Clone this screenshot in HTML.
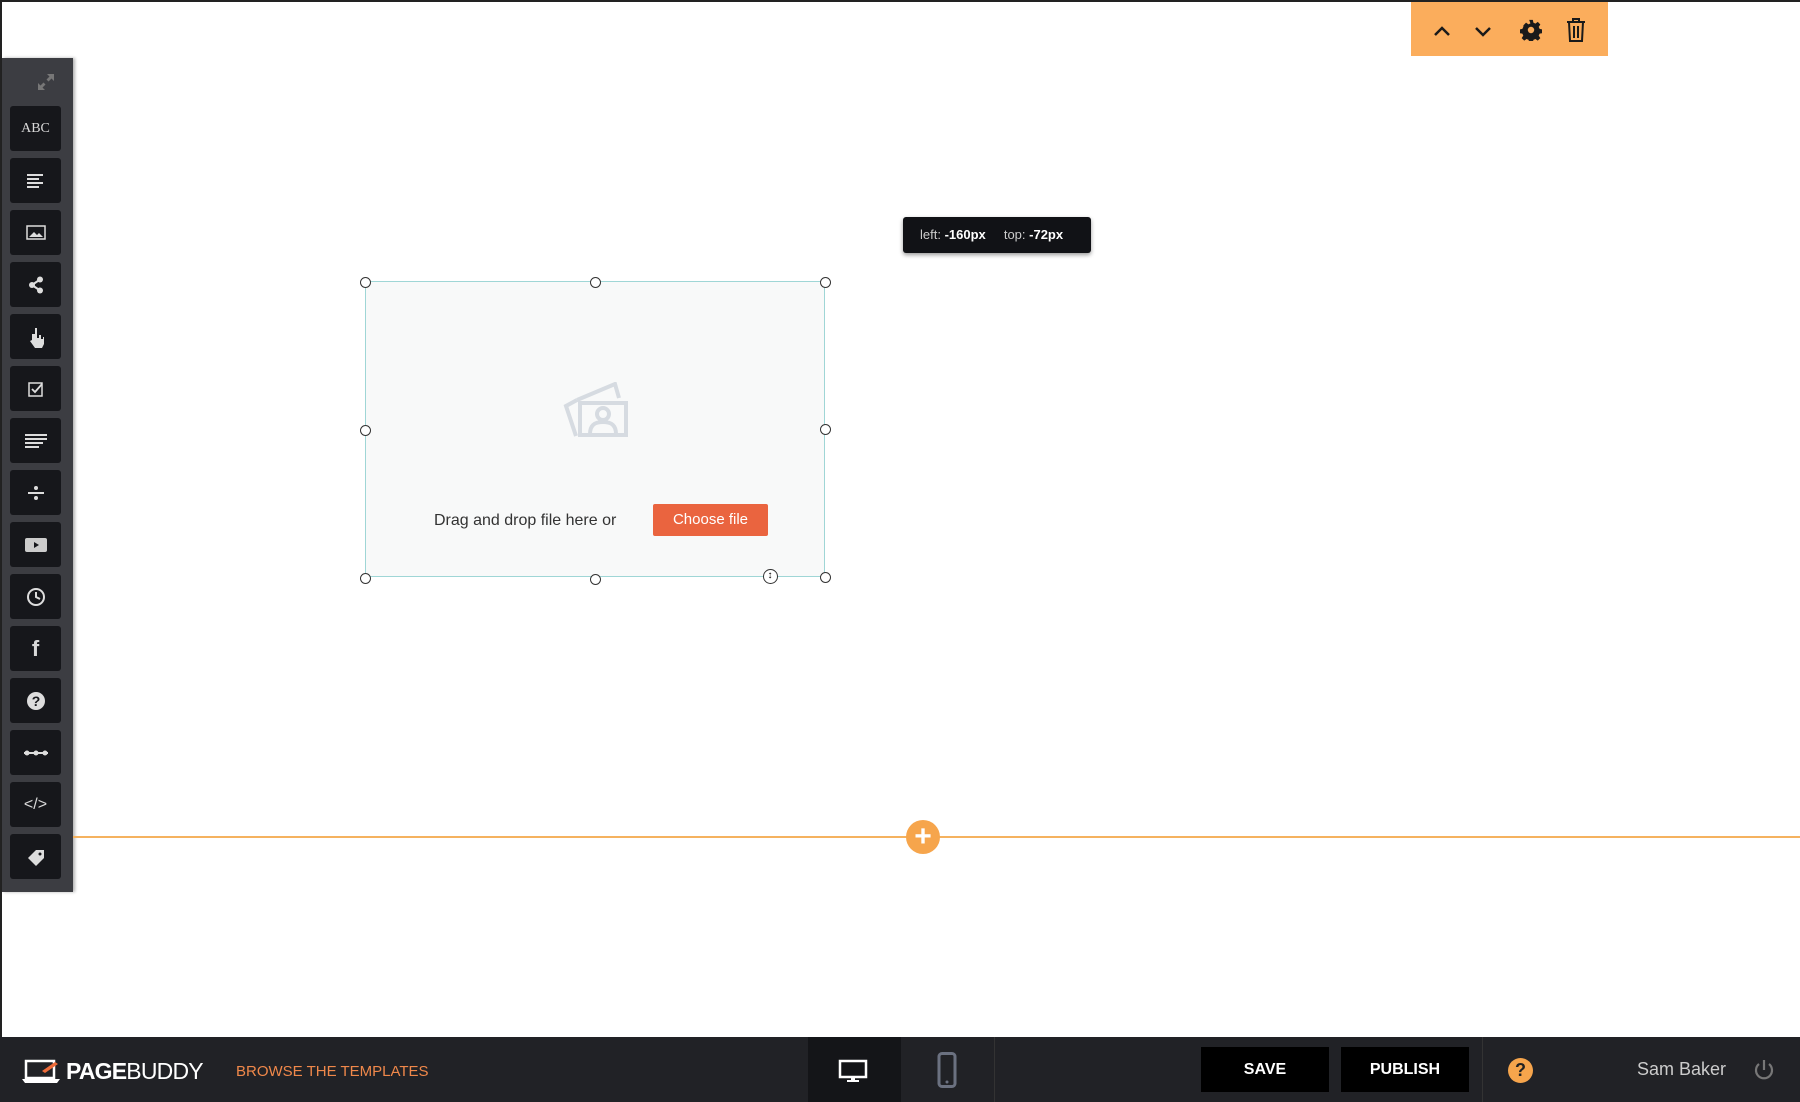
<!DOCTYPE html>
<html><head><meta charset="utf-8"><style>
*{margin:0;padding:0;box-sizing:border-box}
body{width:1800px;height:1102px;position:relative;overflow:hidden;background:#fff;font-family:"Liberation Sans",Arial,sans-serif}
.a{position:absolute}
.btn{position:absolute;left:10px;width:51px;height:45px;background:#16171b;border-radius:3px;display:flex;align-items:center;justify-content:center;color:#d8d8d8}
.h{position:absolute;width:11px;height:11px;border:1.5px solid #333;border-radius:50%;background:#fff;margin:-5.5px 0 0 -5.5px}
</style></head><body>
<div class="a" style="left:0;top:0;width:1800px;height:2px;background:#222"></div>
<div class="a" style="left:0;top:0;width:2px;height:1040px;background:#222"></div>
<!-- sidebar -->
<div class="a" style="left:2px;top:58px;width:71px;height:834px;background:#3c3d42;box-shadow:2px 0 3px rgba(0,0,0,.3)"></div>
<svg class="a" style="left:36px;top:72px" width="20" height="20" viewBox="0 0 20 20" fill="#777"><path d="M11 2h7v7l-2.5-2.5-3 3-2-2 3-3zM9 18H2v-7l2.5 2.5 3-3 2 2-3 3z"/></svg>
<div class="btn" style="top:106px;font-family:'Liberation Serif',serif;font-size:14px">ABC</div>
<div class="btn" style="top:158px"><svg width="18" height="14" fill="#ddd"><rect y="0" width="16" height="2"/><rect y="4" width="12" height="2"/><rect y="8" width="16" height="2"/><rect y="12" width="12" height="2"/></svg></div>
<div class="btn" style="top:210px"><svg width="20" height="15"><rect x="1" y="1" width="18" height="13" fill="none" stroke="#ddd" stroke-width="1.5"/><path d="M3 12l5-5 3 3 2-2 4 4z" fill="#ddd"/></svg></div>
<div class="btn" style="top:262px"><svg width="16" height="18" fill="#ddd"><circle cx="4" cy="9" r="3"/><circle cx="12" cy="3.5" r="3"/><circle cx="12" cy="14.5" r="3"/><path d="M4 9L12 3.5M4 9l8 5.5" stroke="#ddd" stroke-width="2"/></svg></div>
<div class="btn" style="top:314px"><svg width="20" height="22" fill="#ddd"><path d="M6 8h3v-6h2v10h2v-3h2v4h2v-2h1v7l-2 4H9l-5-7 2-1z"/></svg></div>
<div class="btn" style="top:366px"><svg width="16" height="16"><rect x="1" y="2" width="13" height="13" fill="none" stroke="#ddd" stroke-width="1.5"/><path d="M4 8l3 3 7-8" fill="none" stroke="#ddd" stroke-width="1.8"/></svg></div>
<div class="btn" style="top:418px"><svg width="22" height="14" fill="#ddd"><rect width="22" height="2"/><rect y="4" width="22" height="2"/><rect y="8" width="18" height="2"/><rect y="12" width="14" height="2"/></svg></div>
<div class="btn" style="top:470px"><svg width="16" height="14" fill="#ddd"><circle cx="8" cy="2" r="2"/><rect y="6" width="16" height="2"/><circle cx="8" cy="12" r="2"/></svg></div>
<div class="btn" style="top:522px"><svg width="22" height="14"><rect width="22" height="14" rx="2" fill="#ccc"/><path d="M9 4l5 3-5 3z" fill="#16171b"/></svg></div>
<div class="btn" style="top:574px"><svg width="20" height="20"><circle cx="10" cy="10" r="8" fill="none" stroke="#ddd" stroke-width="2"/><path d="M10 5v5l4 2" fill="none" stroke="#ddd" stroke-width="2"/></svg></div>
<div class="btn" style="top:626px;font-weight:bold;font-size:22px">f</div>
<div class="btn" style="top:678px"><svg width="20" height="20"><circle cx="10" cy="10" r="9" fill="#ddd"/><text x="10" y="15" text-anchor="middle" font-size="14" font-weight="bold" fill="#16171b" font-family="Liberation Sans">?</text></svg></div>
<div class="btn" style="top:730px"><svg width="24" height="8"><rect y="3" width="24" height="2" fill="#ddd"/><circle cx="3" cy="4" r="2.5" fill="#ddd"/><circle cx="12" cy="4" r="2.5" fill="#ddd"/><circle cx="21" cy="4" r="2.5" fill="#ddd"/></svg></div>
<div class="btn" style="top:782px;font-size:16px">&lt;/&gt;</div>
<div class="btn" style="top:834px"><svg width="20" height="18" fill="#ddd"><path d="M2 10L10 2h8v8l-8 8z"/><circle cx="14" cy="6" r="1.5" fill="#16171b"/></svg></div>
<!-- toolbar -->
<div class="a" style="left:1411px;top:2px;width:197px;height:54px;background:#fbad5c"></div>
<svg class="a" style="left:1433px;top:20px" width="160" height="22" fill="none" stroke="#1a1a1a" stroke-width="2.5"><path d="M2 15l7-7 7 7"/><path d="M43 8l7 7 7-7"/></svg>
<svg class="a" style="left:1520px;top:19px" width="22" height="22" viewBox="0 0 24 24"><path fill="#1a1a1a" d="M10 1h4l.6 3 2.2 1 2.6-1.8 2.8 2.8-1.8 2.6 1 2.2 3 .6v4l-3 .6-1 2.2 1.8 2.6-2.8 2.8-2.6-1.8-2.2 1-.6 3h-4l-.6-3-2.2-1-2.6 1.8-2.8-2.8 1.8-2.6-1-2.2-3-.6v-4l3-.6 1-2.2L3.8 6.8 6.6 4l2.6 1.8 2.2-1z"/><circle cx="12" cy="12" r="3.5" fill="#fbad5c"/></svg>
<svg class="a" style="left:1566px;top:17px" width="20" height="26" fill="none" stroke="#1a1a1a" stroke-width="2"><path d="M1 5h18M7 5V2h6v3M3 5l1 19h12l1-19M8 9v12M12 9v12"/></svg>
<!-- tooltip -->
<div class="a" style="left:903px;top:217px;width:188px;height:36px;background:#111216;border-radius:3px;box-shadow:0 2px 4px rgba(0,0,0,.4);color:#ccc;font-size:13px;line-height:36px;padding-left:17px">left: <b style="color:#fff">-160px</b>&nbsp;&nbsp;&nbsp;&nbsp; top: <b style="color:#fff">-72px</b></div>
<!-- box -->
<div class="a" style="left:365px;top:281px;width:460px;height:296px;background:#f8f9f9;border:1px solid #9fd6d6"></div>
<svg class="a" style="left:563px;top:382px" width="66" height="56" fill="none" stroke="#d6dbe1" stroke-width="4"><path d="M14 18L3 24l10 30"/><path d="M14 18l38-16 4 14"/><rect x="17" y="21" width="46" height="32"/><circle cx="40" cy="32" r="6"/><path d="M27 52c0-10 6-12 13-12s13 2 13 12"/></svg>
<div class="a" style="left:434px;top:512px;font-size:16px;color:#333">Drag and drop file here or</div>
<div class="a" style="left:653px;top:504px;width:115px;height:32px;background:#ea643f;border-radius:2px;color:#fff;font-size:15px;text-align:center;line-height:31px">Choose file</div>
<div class="h" style="left:365px;top:282px"></div><div class="h" style="left:595px;top:282px"></div><div class="h" style="left:825px;top:282px"></div>
<div class="h" style="left:365px;top:430px"></div><div class="h" style="left:825px;top:429px"></div>
<div class="h" style="left:365px;top:578px"></div><div class="h" style="left:595px;top:579px"></div><div class="h" style="left:825px;top:577px"></div>
<div class="h" style="left:770px;top:576px;width:15px;height:15px;margin:-7.5px 0 0 -7.5px;font-size:10px;line-height:11px;text-align:center;font-weight:bold">↕</div>
<!-- orange line -->
<div class="a" style="left:73px;top:836px;width:1727px;height:1.5px;background:#f5b25f"></div>
<div class="a" style="left:906px;top:820px;width:34px;height:34px;border-radius:50%;background:#f6a54c;color:#fff;font-size:30px;font-weight:bold;text-align:center;line-height:33px">+</div>
<!-- bottom bar -->
<div class="a" style="left:0;top:1037px;width:1800px;height:65px;background:#212226"></div>
<svg class="a" style="left:22px;top:1058px" width="40" height="26"><rect x="4" y="3" width="28" height="17" fill="none" stroke="#fff" stroke-width="2.5"/><path d="M0 21h38l-3 4H3z" fill="#fff"/><path d="M20 13l13-9 3 2-13 9z" fill="#ee6c3a"/></svg>
<div class="a" style="left:66px;top:1058px;font-size:23px;color:#fff;letter-spacing:-0.8px"><b>PAGE</b>BUDDY</div>
<div class="a" style="left:236px;top:1063px;font-size:15px;color:#f0884a">BROWSE THE TEMPLATES</div>
<div class="a" style="left:808px;top:1037px;width:93px;height:65px;background:#141518"></div>
<div class="a" style="left:994px;top:1037px;width:1px;height:65px;background:#333"></div>
<svg class="a" style="left:838px;top:1059px" width="30" height="24"><rect x="2" y="2" width="26" height="16" fill="none" stroke="#fff" stroke-width="2.5"/><rect x="13" y="18" width="4" height="4" fill="#fff"/><rect x="9" y="21" width="12" height="2" fill="#fff"/></svg>
<svg class="a" style="left:937px;top:1052px" width="20" height="36"><rect x="2" y="1.5" width="16" height="33" rx="3" fill="none" stroke="#6b7180" stroke-width="3"/><circle cx="10" cy="30" r="1.5" fill="#6b7180"/></svg>
<div class="a" style="left:1201px;top:1047px;width:128px;height:45px;background:#000;color:#fff;font-weight:bold;font-size:16px;text-align:center;line-height:45px">SAVE</div>
<div class="a" style="left:1341px;top:1047px;width:128px;height:45px;background:#000;color:#fff;font-weight:bold;font-size:16px;text-align:center;line-height:45px">PUBLISH</div>
<div class="a" style="left:1482px;top:1037px;width:1px;height:65px;background:#333"></div>
<div class="a" style="left:1508px;top:1058px;width:25px;height:25px;border-radius:50%;background:#f6a54c;color:#222;font-weight:bold;font-size:18px;text-align:center;line-height:25px">?</div>
<div class="a" style="left:1637px;top:1059px;font-size:18px;color:#ccc">Sam Baker</div>
<svg class="a" style="left:1752px;top:1058px" width="24" height="24" fill="none" stroke="#777" stroke-width="2.2"><path d="M7 6a8 8 0 1 0 10 0"/><path d="M12 2v10"/></svg>
</body></html>
